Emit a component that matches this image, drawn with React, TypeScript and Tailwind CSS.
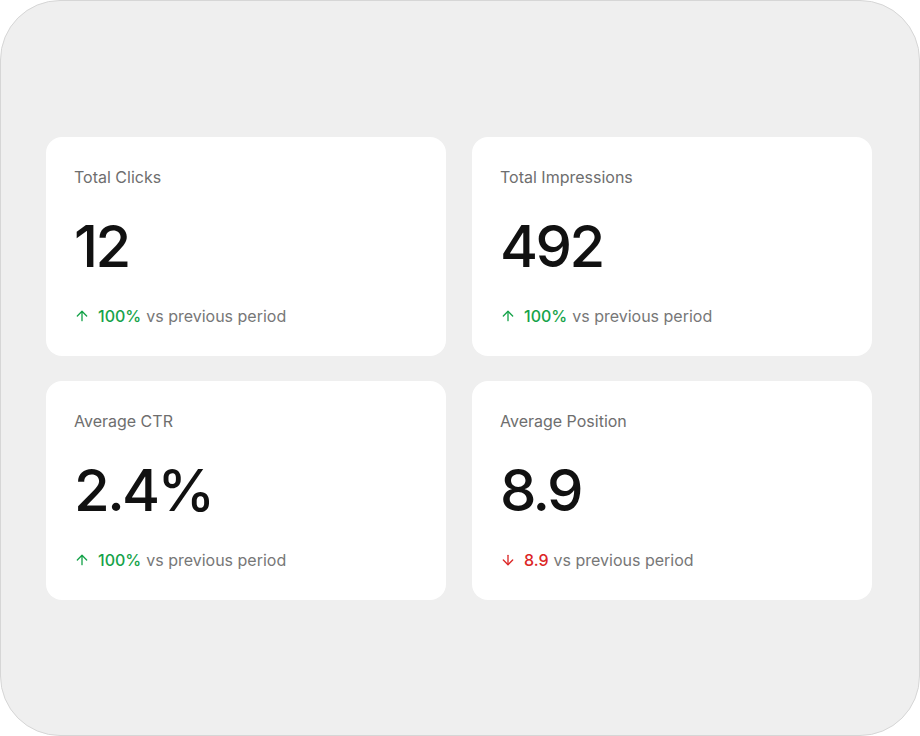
import { ArrowUp, ArrowDown } from 'lucide-react';

type Stat = {
  label: string;
  value: string;
  change: string;
  up: boolean;
};

const stats: Stat[] = [
  { label: 'Total Clicks', value: '12', change: '100%', up: true },
  { label: 'Total Impressions', value: '492', change: '100%', up: true },
  { label: 'Average CTR', value: '2.4%', change: '100%', up: true },
  { label: 'Average Position', value: '8.9', change: '8.9', up: false },
];

function StatCard({ stat }: { stat: Stat }) {
  return (
    <div className="bg-white rounded-2xl h-[219px] px-7 pt-7 pb-7 flex flex-col">
      <p className="text-base leading-6 text-[#6e6e6e]">{stat.label}</p>
      <p className="mt-7 text-[58px] leading-none font-medium text-[#111111] tracking-[-0.045em]">
        {stat.value}
      </p>
      <div className="mt-[29px] flex items-center text-base leading-6 text-[#777777]">
        {stat.up ? (
          <ArrowUp className="w-4 h-4 text-[#16a34a] mr-2" strokeWidth={2} />
        ) : (
          <ArrowDown className="w-4 h-4 text-[#dc2626] mr-2" strokeWidth={2} />
        )}
        <span className={stat.up ? 'font-medium text-[#16a34a]' : 'font-medium text-[#dc2626]'}>
          {stat.change}
        </span>
        <span className="ml-[5px]">vs previous period</span>
      </div>
    </div>
  );
}

export default function App() {
  return (
    <div
      className="w-[920px] h-[736px] bg-[#efefef] border border-[#d6d6d6] rounded-[60px] flex items-center pl-[45px]"
      style={{ fontFamily: 'Inter, "Noto Sans", sans-serif' }}
    >
      <div className="grid grid-cols-2 gap-x-[26px] gap-y-[25px] w-[826px]">
        {stats.map((s) => (
          <StatCard key={s.label} stat={s} />
        ))}
      </div>
    </div>
  );
}
